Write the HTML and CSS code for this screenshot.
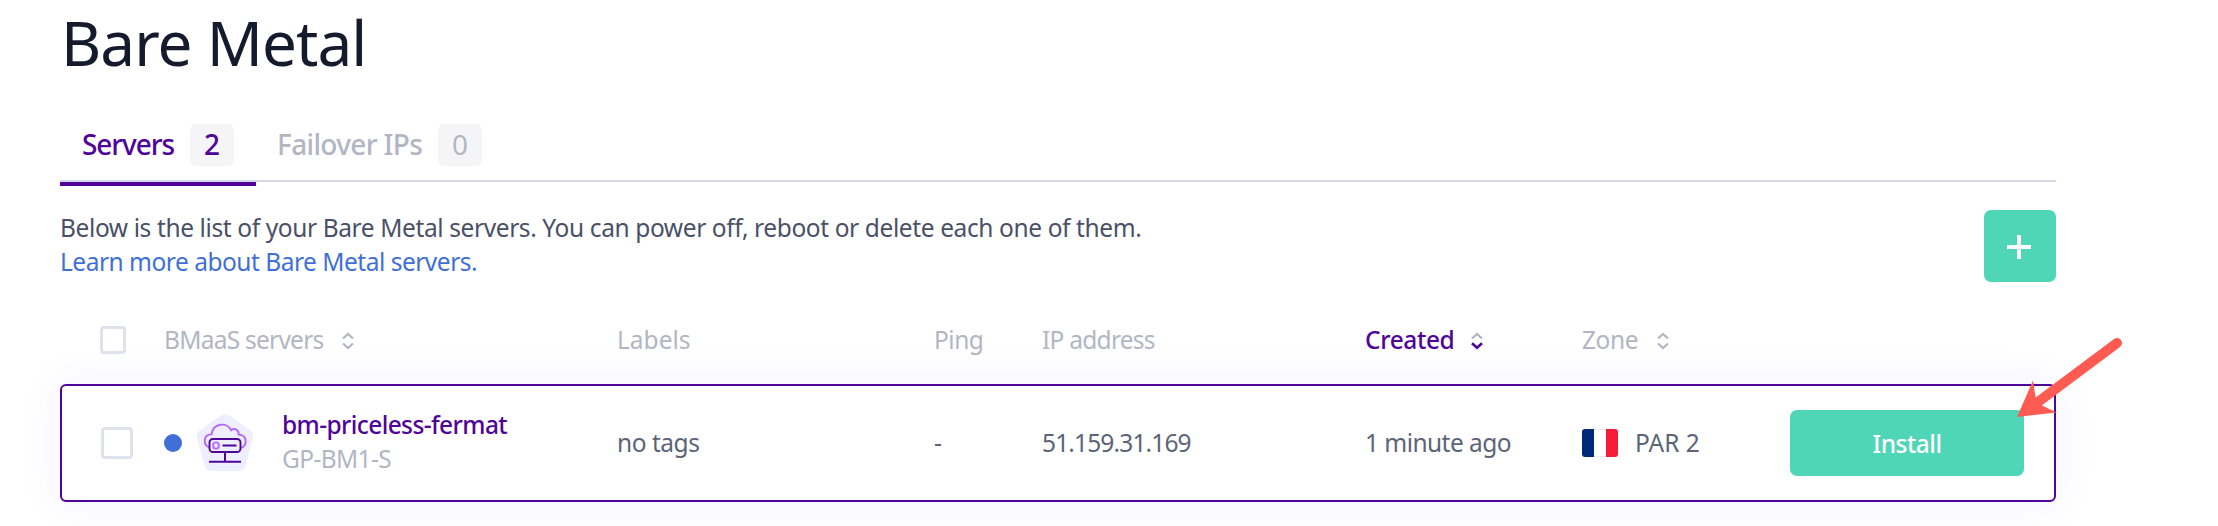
FILE: index.html
```html
<!DOCTYPE html>
<html lang="en">
<head>
<meta charset="utf-8">
<title>Bare Metal</title>
<link rel="stylesheet" href="styles.css">
</head>
<body>
<main class="page">
  <h1 class="title">Bare Metal</h1>
  <nav class="tabs">
    <a class="tab tab-active"><span class="tab-label">Servers</span><span class="badge">2</span></a>
    <a class="tab"><span class="tab-label failover">Failover IPs</span><span class="badge badge-light">0</span></a>
  </nav>
  <section class="intro">
    <div class="intro-text">
      <p class="description">Below is the list of your Bare Metal servers. You can power off, reboot or delete each one of them.</p>
      <a class="link">Learn more about Bare Metal servers.</a>
    </div>
    <button class="add" aria-label="Add server">
      <svg width="26" height="26" viewBox="0 0 26 26"><path d="M13 1v24M1 13h24" stroke="#fff" stroke-width="4"/></svg>
    </button>
  </section>
  <section class="table">
    <div class="grid head">
      <div class="cell"><span class="checkbox checkbox-head"></span></div>
      <div class="cell"><span class="t-tight">BMaaS servers</span><svg class="sort" viewBox="0 0 12 18"><path d="M1 6.500 6 2l5 4.500M1 11.500 6 16l5-4.500"/></svg></div>
      <div class="cell"><span>Labels</span></div>
      <div class="cell"><span class="t-ping">Ping</span></div>
      <div class="cell"><span class="t-tight">IP address</span></div>
      <div class="cell created"><span class="t-created">Created</span><svg class="sort sort-created" viewBox="0 0 12 18"><path d="M1 6.500 6 2l5 4.500"/><path class="sort-on" d="M1 11.300 6 15.800l5-4.500"/></svg></div>
      <div class="cell"><span class="t-zone">Zone</span><svg class="sort sort-zone" viewBox="0 0 12 18"><path d="M1 6.500 6 2l5 4.500M1 11.500 6 16l5-4.500"/></svg></div>
    </div>
    <div class="grid row">
      <div class="cell"><span class="checkbox checkbox-row"></span></div>
      <div class="cell server">
        <span class="status"></span>
        <svg class="server-icon" width="60" height="60" viewBox="0 0 60 60" fill="none">
          <path d="M25.500 1.800Q30 -.8 34.500 1.800L55.500 16.500Q59.200 19.500 58 24L50.500 51.500Q49 57 43.500 57H16.500Q11 57 9.500 51.500L2 24Q.800 19.500 4.500 16.500Z" fill="#eeeeff"/>
          <path d="M14 33.500C8 30.500 8 20.500 16.500 20.400C18 9 32 7.500 36 16.200C39.500 13.500 44 16 43.700 20.600C52 21 53 31 46 34" stroke="#b467ff" stroke-width="1.900"/>
          <rect x="14.500" y="25" width="31" height="13" rx="3.500" fill="#eeeeff" stroke="#4f0599" stroke-width="1.900"/>
          <rect x="18.200" y="28.400" width="5.600" height="6.200" rx="2.600" stroke="#b467ff" stroke-width="1.900"/>
          <path d="M27.500 31.500h14M30 38v9.500M14 47.700h32" stroke="#4f0599" stroke-width="2"/>
        </svg>
        <div class="server-text"><span class="name">bm-priceless-fermat</span><span class="model">GP-BM1-S</span></div>
      </div>
      <div class="cell"><span class="t-tags">no tags</span></div>
      <div class="cell"><span>-</span></div>
      <div class="cell"><span class="t-ip">51.159.31.169</span></div>
      <div class="cell"><span class="t-ago">1 minute ago</span></div>
      <div class="cell"><span class="flag"><i class="blue"></i><i class="white"></i><i class="red"></i></span><span>PAR 2</span></div>
      <div class="cell"><button class="install">Install</button></div>
    </div>
  </section>
  <svg class="pointer" width="112" height="90" viewBox="2012 334 112 90">
    <path d="M2117 343 2038 402" stroke="#ff5b52" stroke-width="10" stroke-linecap="round"/>
    <path d="M2017 417 2033 380.500 2035.500 397 2042 405.500 2056.500 412.500Z" fill="#ff5b52"/>
  </svg>
</main>
</body>
</html>
```
FILE: styles.css
```css
* { box-sizing: border-box; }
body {
  margin: 0;
  background: #fff;
  color: #4a5068;
  font-family: "Noto Sans", sans-serif;
  font-size: 24.5px;
  line-height: 34px;
  overflow: hidden;
}
.page { position: relative; width: 2056px; height: 526px; padding: 12px 0 0 60px; }
.title {
  margin: 0 0 0 1px;
  font-size: 62px;
  font-weight: 400;
  line-height: 60px;
  letter-spacing: -0.95px;
  color: #151a2d;
}
.tabs { display: flex; height: 114px; padding-top: 40px; box-shadow: inset 0 -4px #fff, inset 0 -6px #d6dae8; }
.tab {
  display: flex;
  align-items: center;
  gap: 16px;
  height: 74px;
  padding: 0 22px 8px;
  font-size: 28px;
  font-weight: 500;
  color: #b2b6c3;
}
.tab-active { width: 196px; color: #4f0599; border-bottom: 4px solid #4f0599; padding-bottom: 4px; }
.tab-label { width: 92px; padding-bottom: 3px; letter-spacing: -1.1px; white-space: nowrap; }
.failover { width: 145px; letter-spacing: -0.65px; margin-left: -1px; }
.badge {
  width: 44px;
  height: 42px;
  border-radius: 6px;
  background: #f5f5f8;
  line-height: 40px;
  text-align: center;
  flex: none;
}
.badge-light { font-weight: 400; }
.intro { display: flex; justify-content: space-between; margin-top: 24px; }
.intro-text { padding-top: 1px; }
.description { margin: 0; letter-spacing: -0.39px; }
.link { color: #3f6fd8; letter-spacing: -0.49px; }
.add {
  display: grid;
  place-items: center;
  width: 72px;
  height: 72px;
  padding: 2px 2px 0 0;
  border: 0;
  border-radius: 7px;
  background: #4fd6b7;
}
.table { margin-top: 14px; }
.grid {
  display: grid;
  grid-template-columns: 102px 453px 317px 108px 323px 217px 208px 264px;
  border: 2px solid transparent;
}
.cell { display: flex; align-items: center; white-space: nowrap; }
.head { height: 88px; color: #b2b6c3; }
.row {
  height: 118px;
  border-color: #4f0599;
  border-radius: 6px;
  background: #fff;
  color: #5c6478;
  box-shadow: 0 0 40px 4px rgba(90, 80, 255, 0.06);
}
.checkbox { border: 3px solid #dde2ed; border-radius: 4px; background: #fff; }
.checkbox-head { width: 26px; height: 28px; margin: 0 0 0 38px; }
.checkbox-row { width: 32px; height: 32px; margin-left: 39px; }
.t-tight, .t-ip { letter-spacing: -0.75px; }
.t-ip { letter-spacing: -0.85px; }
.t-ping { letter-spacing: -0.5px; }
.t-created { letter-spacing: -0.4px; font-weight: 500; }
.t-zone { letter-spacing: -0.4px; }
.t-tags { letter-spacing: -0.47px; }
.t-ago { letter-spacing: -0.55px; }
.created { color: #4f0599; }
.sort { width: 12px; height: 18px; margin: 2px 0 0 18px; fill: none; stroke: #b2b6c3; stroke-width: 2.2; }
.sort-created { margin-left: 17px; }
.sort-zone { margin-left: 19px; }
.sort-on { stroke: #4f0599; stroke-width: 2.6; }
.status { width: 18px; height: 18px; border-radius: 50%; background: #416fd8; }
.server-icon { margin: 2px 0 0 13px; }
.server-text { display: flex; flex-direction: column; margin: -2px 0 0 27px; }
.name { color: #4f0599; font-weight: 500; letter-spacing: -0.61px; }
.model { color: #b2b6c3; letter-spacing: -0.63px; }
.flag { display: flex; width: 36px; height: 28px; margin-right: 17px; border-radius: 3px; overflow: hidden; }
.flag i { flex: 1; }
.blue { background: #002878; }
.white { background: #fff; box-shadow: inset 0 1px #eee, inset 0 -1px #eee; }
.red { background: #f51c39; }
.install {
  width: 234px;
  height: 66px;
  padding: 0;
  border: 0;
  border-radius: 7px;
  background: #4fd6b7;
  color: #fff;
  font: 500 24.5px "Noto Sans", sans-serif;
  letter-spacing: -0.5px;
}
/* Callout arrow lying over the table's corner */
.pointer { position: absolute; left: 2012px; top: 334px; }
```
